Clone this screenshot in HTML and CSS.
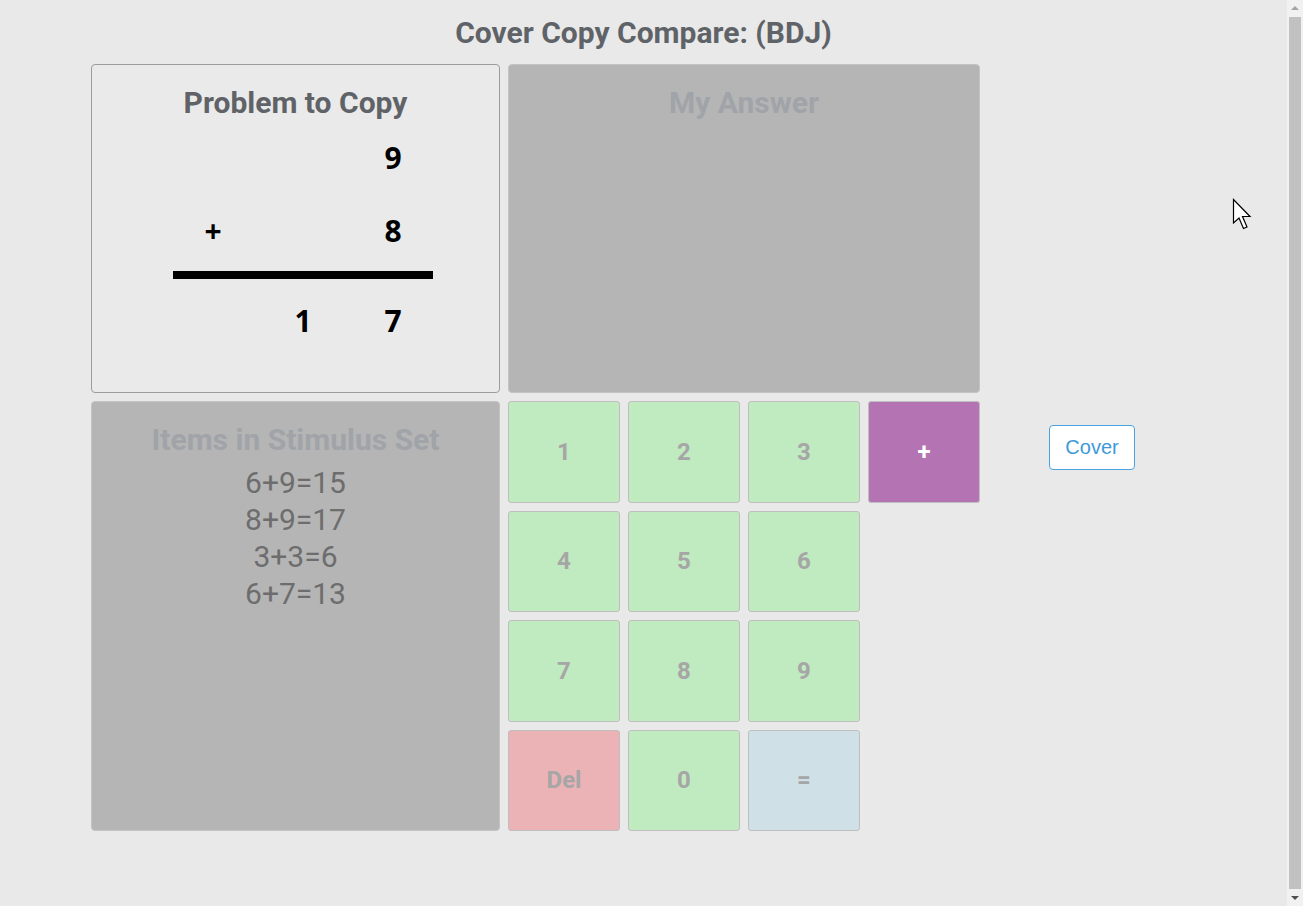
FILE: index.html
```html
<!DOCTYPE html>
<html lang="en">
<head>
<meta charset="utf-8">
<title>Cover Copy Compare</title>
<link rel="stylesheet" href="styles.css">
</head>
<body>
<div class="page">
  <h1 class="page-title">Cover Copy Compare: (BDJ)</h1>
  <main class="board">
    <section class="panel problem">
      <h2 class="panel-title">Problem to Copy</h2>
      <div class="math">
        <span class="cell"></span><span class="cell"></span><span class="cell">9</span>
        <span class="cell">+</span><span class="cell"></span><span class="cell">8</span>
        <span class="rule"></span>
        <span class="cell"></span><span class="cell">1</span><span class="cell">7</span>
      </div>
    </section>
    <section class="panel covered answer">
      <h2 class="panel-title">My Answer</h2>
    </section>
    <section class="panel covered stimulus">
      <h2 class="panel-title">Items in Stimulus Set</h2>
      <ul class="items">
        <li>6+9=15</li>
        <li>8+9=17</li>
        <li>3+3=6</li>
        <li>6+7=13</li>
      </ul>
    </section>
    <div class="keypad">
      <button class="key green">1</button>
      <button class="key green">2</button>
      <button class="key green">3</button>
      <button class="key purple">+</button>
      <button class="key green">4</button>
      <button class="key green">5</button>
      <button class="key green">6</button>
      <span class="blank"></span>
      <button class="key green">7</button>
      <button class="key green">8</button>
      <button class="key green">9</button>
      <span class="blank"></span>
      <button class="key red">Del</button>
      <button class="key green">0</button>
      <button class="key blue">=</button>
    </div>
    <div class="side">
      <button class="cover-btn">Cover</button>
    </div>
  </main>
</div>
<div class="scrollbar" aria-hidden="true">
  <span class="sb-btn"><span class="arrow-up"></span></span>
  <span class="sb-thumb"></span>
  <span class="sb-btn"><span class="arrow-down"></span></span>
</div>
<svg class="cursor" width="20" height="32" viewBox="0 0 20 32">
  <path d="M1.5 1.5 L1.5 25 L7 20 L11.5 30.5 L15 29 L10.5 18.5 L18 18.5 Z" fill="#fff" stroke="#000" stroke-width="1.2" stroke-linejoin="miter"/>
</svg>
</body>
</html>
```
FILE: styles.css
```css
html, body {
  margin: 0;
  padding: 0;
}
body {
  background: #e9e9e9;
  font-family: Roboto, "Liberation Sans", sans-serif;
  position: relative;
  min-height: 906px;
  overflow: hidden;
}
.page {
  margin-right: 16px;
}
.page-title {
  margin: 0;
  padding-top: 15px;
  height: 51px;
  box-sizing: border-box;
  text-align: center;
  font-size: 30px;
  line-height: 36px;
  font-weight: 700;
  color: #5f6368;
}
.board {
  display: grid;
  grid-template-columns: 409px 472px auto;
  grid-template-rows: 329px 430px;
  gap: 8px;
  margin-left: 91px;
  margin-top: 13px;
}
.panel {
  box-sizing: border-box;
  border-radius: 4px;
  padding-top: 20px;
  text-align: center;
}
.problem {
  border: 1px solid #9c9c9c;
  background: #eaeaea;
}
.covered {
  background: #b5b5b5;
  border: 1px solid #c3c3c3;
}
.answer {
  grid-column: 2;
  grid-row: 1;
}
.stimulus {
  grid-column: 1;
  grid-row: 2;
}
.panel-title {
  margin: 0;
  font-size: 30px;
  line-height: 36px;
  font-weight: 700;
  color: #5f6368;
}
.covered .panel-title {
  color: #a0a4a9;
}
.math {
  display: grid;
  grid-template-columns: repeat(3, 90px);
  grid-template-rows: 73px 73px auto 73px;
  margin-left: 76px;
  width: 270px;
  font-family: "Open Sans", "Noto Sans", sans-serif;
  font-weight: 700;
  font-size: 30px;
  color: #000;
}
.cell {
  display: flex;
  align-items: center;
  justify-content: center;
}
.rule {
  grid-column: 1 / span 3;
  height: 8px;
  width: 260px;
  margin: 4px 0 5px 5px;
  background: #000;
}
.items {
  list-style: none;
  margin: 6px 0 0;
  padding: 0;
  font-size: 30px;
  line-height: 37px;
  color: #6d6d6d;
}
.keypad {
  grid-column: 2;
  grid-row: 2;
  display: grid;
  grid-template-columns: repeat(4, 1fr);
  grid-template-rows: repeat(4, 1fr);
  gap: 8px;
}
.key {
  border: 1px solid #bfbfbf;
  border-radius: 3px;
  font-family: Roboto, sans-serif;
  font-weight: 700;
  font-size: 24px;
  color: #a6a6a6;
  padding: 0;
}
.green { background: #c0eabf; }
.red { background: #ebb3b6; }
.blue { background: #cfe0e6; }
.purple { background: #b474b3; color: #fff; }
.side {
  grid-column: 3;
  grid-row: 2;
  padding-left: 61px;
  padding-top: 24px;
}
.cover-btn {
  width: 86px;
  height: 45px;
  background: #fff;
  border: 1px solid #4aa3df;
  border-radius: 4px;
  color: #3d9ad9;
  font-family: "Liberation Sans", Arial, sans-serif;
  font-size: 20px;
  padding: 0;
}
.scrollbar {
  position: fixed;
  top: 0;
  right: 0;
  bottom: 0;
  width: 16px;
  background: #f1f1f1;
  display: flex;
  flex-direction: column;
}
.sb-btn {
  height: 16px;
  display: flex;
  align-items: center;
  justify-content: center;
  flex: none;
}
.arrow-up {
  width: 0;
  height: 0;
  border-left: 4px solid transparent;
  border-right: 4px solid transparent;
  border-bottom: 4px solid #a3a3a3;
}
.arrow-down {
  width: 0;
  height: 0;
  border-left: 4px solid transparent;
  border-right: 4px solid transparent;
  border-top: 4px solid #505050;
}
.sb-thumb {
  flex: 1;
  margin: 1px 2px;
  background: #c1c1c1;
}
.cursor {
  position: absolute;
  left: 1232px;
  top: 198px;
}
```
